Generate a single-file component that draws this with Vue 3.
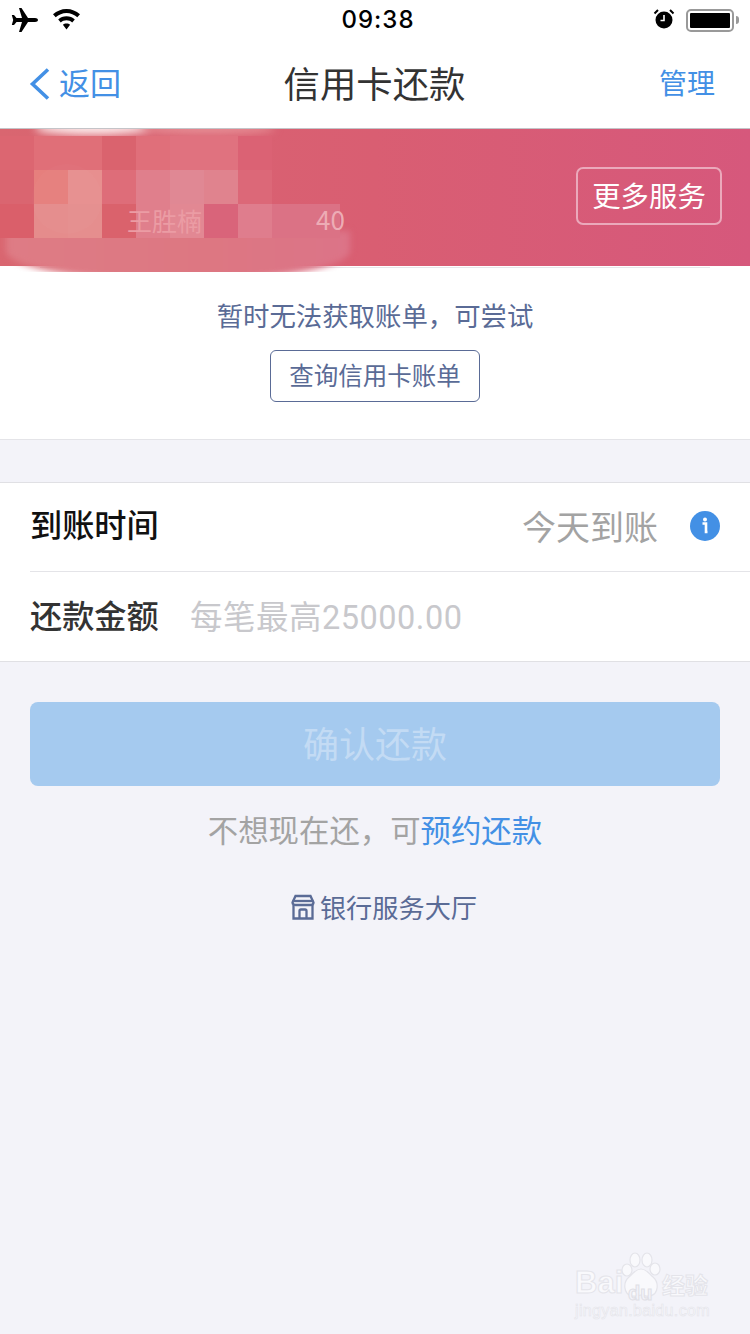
<script setup>
const mosaic = [
  ['#dc6671','#e06f78','#e06f78','#da636e','#e06f7a','#e0727f','#e0727f','#db6274','transparent','transparent'],
  ['#da6570','#e67f7d','#e78f8f','#de6d79','#e07f8c','#e08894','#e0838e','#dc6878','transparent','transparent'],
  ['#da5f6a','#e58c8c','#e58e8e','#da626c','#e07f8c','#e28893','#d9647a','#df7d8d','#db7285','#db7285'],
]
</script>

<template>
  <div class="page">
    <div class="status">
      <div class="status-left">
        <svg class="plane" width="28" height="26" viewBox="0 0 28 26"><path d="M27 13c0-1.300-1.300-2-3-2h-7L10.500 1H8l3 10H5.500L3 8H.8l1.400 5-1.400 5H3l2.500-3H11L8 25h2.500L17 15h7c1.700 0 3-.7 3-2z" fill="#000"/></svg>
        <svg class="wifi" width="29" height="22" viewBox="0 0 28 22"><path d="M14 1C8.800 1 4.400 3 .5 6.300l2.700 3C6.200 6.700 10 5 14 5s7.800 1.700 10.800 4.300l2.700-3C23.600 3 19.200 1 14 1z" fill="#000"/><path d="M14 8.300c-3.300 0-6 1.200-8.300 3.100l2.600 3c1.500-1.300 3.500-2.100 5.700-2.100s4.200.8 5.700 2.100l2.600-3C20 9.500 17.300 8.300 14 8.300z" fill="#000"/><path d="M14 15.500c-1.500 0-2.700.5-3.600 1.300L14 21.500l3.600-4.700c-.9-.8-2.100-1.300-3.600-1.300z" fill="#000"/></svg>
      </div>
      <div class="clock">09:38</div>
      <div class="status-right">
        <svg width="22" height="22" viewBox="0 0 22 22"><circle cx="11" cy="12" r="8.500" fill="#000"/><path d="M11 7v5.500H7.500" stroke="#fff" stroke-width="1.600" fill="none"/><path d="M1.500 5.500 5 2M20.500 5.500 17 2" stroke="#000" stroke-width="2" fill="none"/></svg>
        <div class="battery"><div class="battery-fill"></div></div>
        <div class="battery-tip"></div>
      </div>
    </div>

    <div class="nav">
      <div class="back">
        <svg width="22" height="34" viewBox="0 0 22 34"><path d="M19 2.500 3.500 17 19 31.500" stroke="#4390e5" stroke-width="3.600" fill="none"/></svg>
        <span>返回</span>
      </div>
      <div class="title">信用卡还款</div>
      <div class="manage">管理</div>
    </div>

    <div class="banner">
      <button class="more">更多服务</button>
      <div class="mosaic">
        <div class="glow-top"></div>
        <div class="glow-top soft"></div>
        <div class="glow-bottom"></div>
        <div class="cells">
          <template v-for="(row, r) in mosaic" :key="r">
            <i v-for="(c, k) in row" :key="k" :style="{ background: c }"></i>
          </template>
        </div>
        <div class="avatar"></div>
        <div class="name">王胜楠</div>
        <div class="tail">40</div>
      </div>
    </div>

    <div class="bill">
      <div class="bill-rule"></div>
      <p>暂时无法获取账单，可尝试</p>
      <button class="query">查询信用卡账单</button>
    </div>

    <div class="form">
      <div class="row first">
        <span class="label dark">到账时间</span>
        <span class="today">今天到账</span>
        <svg class="info" width="30" height="30" viewBox="0 0 30 30"><circle cx="15" cy="15" r="15" fill="#4390e5"/><circle cx="15" cy="8.500" r="2" fill="#fff"/><path d="M12.500 12.500h3.500v8.500h1.500" stroke="#fff" stroke-width="2.600" fill="none"/></svg>
      </div>
      <div class="row second">
        <span class="label">还款金额</span>
        <span class="placeholder">每笔最高25000.00</span>
      </div>
    </div>

    <div class="actions">
      <button class="confirm">确认还款</button>
      <p class="later">不想现在还，可<span>预约还款</span></p>
      <div class="hall">
        <svg width="24" height="26" viewBox="0 0 24 26" fill="none" stroke="#5a6b96" stroke-width="2.300"><path d="M4.500 2h15l3 6.500c0 1.800-1.500 2.500-3 2.500h-15c-1.500 0-3-.7-3-2.500L4.500 2z"/><path d="M1.500 7h21"/><path d="M2.500 11v13.500h19V11"/><path d="M8.500 24.500V17q0-1.500 1.500-1.500h4q1.500 0 1.500 1.500v7.500"/></svg>
        <span>银行服务大厅</span>
      </div>
    </div>

    <div class="mark">
      <svg class="paw" width="40" height="46" viewBox="0 0 40 46" fill="#f9f9fc" stroke="#e4e4ea" stroke-width="1.200">
        <ellipse cx="6" cy="18" rx="5" ry="6"/>
        <ellipse cx="14" cy="8" rx="5" ry="7"/>
        <ellipse cx="26" cy="8" rx="5" ry="7"/>
        <ellipse cx="34" cy="17" rx="5" ry="6"/>
        <path d="M20 17c6 0 8 5 12 8 6 5 6 17-3 19-4 .8-6-1-9-1s-5 1.800-9 1C2 42 2 30 8 25c4-3 6-8 12-8z"/>
      </svg>
      <div class="mark-line">
        <span class="bai">Bai</span><span class="du">du</span><span class="jy">经验</span>
      </div>
      <div class="mark-url">jingyan.baidu.com</div>
    </div>
  </div>
</template>

<style scoped>
.page {
  position: relative;
  width: 750px;
  height: 1334px;
  overflow: hidden;
  background: #f3f3f9;
  font-family: "Noto Sans CJK SC", "Noto Sans", sans-serif;
}
button { font-family: inherit; padding: 0; background: none; }
p { margin: 0; }

.status {
  height: 40px;
  background: #fff;
  display: flex;
  align-items: center;
  justify-content: space-between;
  padding: 0 11px 0 11px;
  position: relative;
}
.status-left { display: flex; align-items: center; gap: 13px; }
.wifi { margin-bottom: 2px; }
.clock {
  position: absolute;
  left: 6px; right: 0; top: 4px;
  text-align: center;
  font: 500 24px/32px "Inter", sans-serif;
  letter-spacing: 1px;
  color: #000;
}
.status-right { display: flex; align-items: center; }
.status-right svg { margin-right: 11px; margin-bottom: 2px; }
.battery {
  width: 48px; height: 23px;
  box-sizing: border-box;
  border: 2px solid #999;
  border-radius: 5px;
  padding: 2px;
}
.battery-fill { width: 100%; height: 100%; background: #000; border-radius: 1px; }
.battery-tip { width: 3px; height: 8px; background: #999; border-radius: 0 3px 3px 0; margin-left: 2px; }

.nav {
  height: 88px;
  background: #fff;
  border-bottom: 1px solid #c4c4c8;
  display: flex;
  align-items: center;
  justify-content: space-between;
  padding: 0 35px 0 29px;
  position: relative;
}
.back { display: flex; align-items: center; gap: 8px; color: #4390e5; font-size: 31px; line-height: 40px; }
.back span, .manage { padding-bottom: 4px; }
.title {
  position: absolute;
  left: -1px; right: 0;
  text-align: center;
  font-size: 36.4px;
  line-height: 48px;
  padding-bottom: 4px;
  color: #333;
}
.manage { color: #4390e5; font-size: 28px; }

.banner {
  position: relative;
  z-index: 1;
  height: 137px;
  background: linear-gradient(90deg, #d96670 0%, #d95e72 50%, #d6587c 100%);
  display: flex;
  justify-content: flex-end;
  align-items: center;
}
.more {
  width: 146px;
  height: 58px;
  margin-right: 28px;
  margin-bottom: 4px;
  padding-bottom: 3px;
  border: 2px solid #eba9bb;
  border-radius: 7px;
  color: #fff;
  font-size: 28.4px;
}
.mosaic {
  position: absolute;
  left: 0; top: 0;
  width: 360px;
  height: 143px;
  overflow: hidden;
  pointer-events: none;
}
.glow-top {
  position: absolute;
  left: 35px; top: -8px;
  width: 115px;
  height: 14px;
  border-radius: 50%;
  background: #fbeaea;
  filter: blur(4px);
}
.glow-top.soft {
  left: 140px;
  width: 135px;
  background: #e58a92;
}
.glow-bottom {
  position: absolute;
  left: 6px; top: 102px;
  width: 344px;
  height: 50px;
  border-radius: 0 0 50% 50% / 0 0 60% 60%;
  background: linear-gradient(90deg, #de7c85, #dd7782 60%, #dc7488);
  filter: blur(3px);
}
.cells {
  position: absolute;
  left: 0; top: 7px;
  display: grid;
  grid-template-columns: repeat(10, 34px);
  grid-auto-rows: 34px;
}
.avatar {
  position: absolute;
  left: 32px; top: 35px;
  width: 70px;
  height: 70px;
  border-radius: 50%;
  background: rgba(255, 255, 255, 0.02);
}
.name {
  position: absolute;
  left: 127px; top: 75px;
  font-size: 25px;
  line-height: 32px;
  color: #eb9ca4;
}
.tail {
  position: absolute;
  left: 316px; top: 72px;
  font-size: 26px;
  line-height: 36px;
  color: #edacb5;
}

.bill {
  position: relative;
  height: 173px;
  background: #fff;
  border-bottom: 1px solid #e4e4e8;
  display: flex;
  flex-direction: column;
  align-items: center;
}
.bill-rule {
  position: absolute;
  left: 40px; top: 1px;
  width: 670px;
  height: 1px;
  background: #e6e6ea;
}
.bill p {
  margin-top: 29px;
  font-size: 26.4px;
  line-height: 40px;
  color: #5a6b96;
}
.query {
  margin-top: 15px;
  width: 210px;
  height: 52px;
  padding-bottom: 4px;
  box-sizing: border-box;
  border: 1px solid #5a6b96;
  border-radius: 6px;
  font-size: 24.5px;
  color: #5a6b96;
}

.form {
  margin-top: 42px;
  background: #fff;
  border-top: 1px solid #e0e0e4;
  border-bottom: 1px solid #e0e0e4;
}
.row {
  display: flex;
  align-items: center;
  margin-left: 30px;
  padding-right: 30px;
}
.row.first { height: 88px; border-bottom: 1px solid #e4e4e8; }
.row.second { height: 89px; }
.label { font-size: 32.2px; font-weight: 500; color: #333; width: 160px; margin-bottom: 6px; }
.label.dark { color: #111; margin-bottom: 8px; }
.today { margin-left: auto; font-size: 34px; color: #a3a3a3; margin-right: 32px; margin-bottom: 4px; }
.info { margin-bottom: 3px; }
.placeholder {
  font-family: Roboto, "Noto Sans CJK SC", sans-serif;
  font-size: 32.5px;
  color: #c8c8cc;
  letter-spacing: 0.5px;
  margin-bottom: 4px;
}

.actions {
  padding: 40px 30px 0;
  display: flex;
  flex-direction: column;
  align-items: center;
}
.confirm {
  width: 690px;
  height: 84px;
  padding-bottom: 4px;
  border: 0;
  border-radius: 8px;
  background: #a5caef;
  color: #c3dbf4;
  font-size: 36px;
}
.later {
  margin-top: 19px;
  font-size: 30.4px;
  line-height: 48px;
  color: #a3a3a3;
}
.later span { color: #4390e5; }
.hall {
  margin: 34px 0 0 18px;
  display: flex;
  align-items: center;
  gap: 5px;
  color: #5a6b96;
  font-size: 26.2px;
  line-height: 40px;
}

.mark {
  position: absolute;
  left: 575px; top: 1252px;
  width: 150px;
  height: 70px;
  color: #f9f9fc;
}
.paw { position: absolute; left: 46px; top: 0; }
.mark-line {
  position: absolute;
  left: 0; top: 13px;
  white-space: nowrap;
  height: 40px;
}
.bai {
  position: absolute;
  left: 0; top: -2px;
  font: 700 31px/40px "Liberation Sans", sans-serif;
  -webkit-text-stroke: 1px #e4e4ea;
}
.du {
  position: absolute;
  left: 53px; top: 14px;
  font: 700 20px/28px "Liberation Sans", sans-serif;
  color: #f3f3f9;
  -webkit-text-stroke: 1px #e0e0e6;
}
.jy {
  position: absolute;
  left: 87px; top: 0;
  font-size: 23px;
  line-height: 38px;
  font-weight: 700;
  -webkit-text-stroke: 1px #e4e4ea;
}
.mark-url {
  position: absolute;
  left: 0; top: 49px;
  font: 16px/20px "Liberation Sans", sans-serif;
  letter-spacing: 0.35px;
  white-space: nowrap;
  color: #f9f9fc;
  -webkit-text-stroke: 0.6px #e4e4ea;
}
</style>
